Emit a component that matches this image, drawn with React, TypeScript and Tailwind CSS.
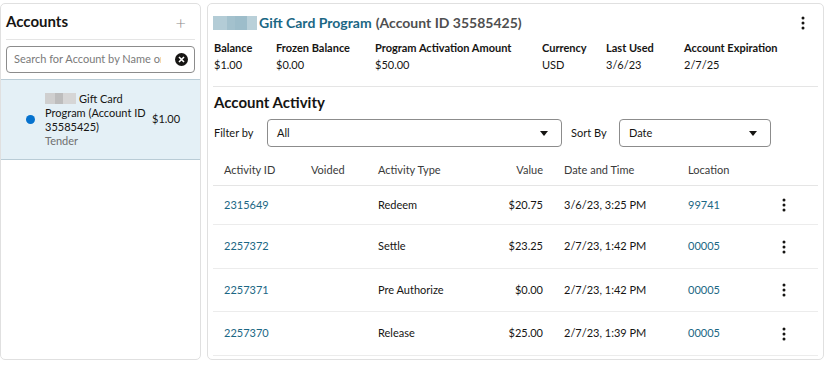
import React from "react";

const rows = [
  { id: "2315649", type: "Redeem", value: "$20.75", date: "3/6/23, 3:25 PM", loc: "99741", h: "h-[39px]" },
  { id: "2257372", type: "Settle", value: "$23.25", date: "2/7/23, 1:42 PM", loc: "00005", h: "h-[44px]" },
  { id: "2257371", type: "Pre Authorize", value: "$0.00", date: "2/7/23, 1:42 PM", loc: "00005", h: "h-[43px]" },
  { id: "2257370", type: "Release", value: "$25.00", date: "2/7/23, 1:39 PM", loc: "00005", h: "h-[44px]" },
];

const details = [
  { label: "Balance", value: "$1.00", w: "w-[62px]" },
  { label: "Frozen Balance", value: "$0.00", w: "w-[99px]" },
  { label: "Program Activation Amount", value: "$50.00", w: "w-[167px]" },
  { label: "Currency", value: "USD", w: "w-[64px]" },
  { label: "Last Used", value: "3/6/23", w: "w-[78px]" },
  { label: "Account Expiration", value: "2/7/25", w: "w-[120px]" },
];

const cols = "grid grid-cols-[87px_67px_120px_45px_145px_88px_16px]";

function Kebab() {
  return (
    <svg width="4" height="14" viewBox="0 0 4 14" className="fill-[#161513]">
      <circle cx="2" cy="2" r="1.5" />
      <circle cx="2" cy="7" r="1.5" />
      <circle cx="2" cy="12" r="1.5" />
    </svg>
  );
}

function Caret() {
  return (
    <svg width="8" height="5" viewBox="0 0 8 5" className="fill-[#161513]">
      <path d="M0 0h8L4 5z" />
    </svg>
  );
}

const App: React.FC = () => {
  return (
    <div className="w-[830px] h-[367px] bg-white flex gap-[6px] pt-[3px] pb-[7px] pr-[6px] text-[#161513] font-['Lato',sans-serif] text-[11px]">
      {/* accounts list */}
      <div className="w-[201px] shrink-0 border border-[#e0e0e0] rounded-[5px] flex flex-col">
        <div className="flex items-center justify-between h-[36px] shrink-0 mx-[5px] border-b border-[#e5e5e5]">
          <span className="text-[15px] font-bold">Accounts</span>
          <span className="text-[#8a8a8a] text-[18px] font-light mr-[9px] leading-none">+</span>
        </div>
        <div className="mx-[5px] mt-[6px] h-[27px] shrink-0 border border-[#8c8c8c] rounded-[4px] flex items-center pl-[7px] pr-[6px] gap-[14px]">
          <span className="flex-1 text-[#7a7a7a] text-[11px] whitespace-nowrap overflow-hidden">Search for Account by Name or ID</span>
          <span className="w-[13px] h-[13px] rounded-full bg-[#161513] flex items-center justify-center shrink-0">
            <svg width="7" height="7" viewBox="0 0 7 7" className="stroke-white" strokeWidth="1.6">
              <path d="M1 1l5 5M6 1L1 6" />
            </svg>
          </span>
        </div>
        <div className="mt-[6px] h-[81px] shrink-0 bg-[#e4f0f6] border-y border-[#b9ccd6] flex items-center">
          <span className="w-[9px] h-[9px] rounded-full bg-[#0572ce] ml-[25px] mr-[10px] shrink-0" />
          <div className="w-[103px] leading-[14px]">
            <div className="flex items-center">
              <span className="inline-flex h-[11px] mr-[3px]">
                <span className="w-[10px] bg-[#cfcfcf]" />
                <span className="w-[8px] bg-[#bdbdbd]" />
                <span className="w-[13px] bg-[#d6d6d6]" />
              </span>
              Gift Card
            </div>
            <div>Program (Account ID 35585425)</div>
            <div className="text-[#6f6f6f]">Tender</div>
          </div>
          <span className="ml-[4px]">$1.00</span>
        </div>
      </div>

      {/* account detail */}
      <div className="flex-1 border border-[#e0e0e0] rounded-[5px] px-[5px] flex flex-col">
        <div className="flex items-center h-[37px] shrink-0">
          <span className="inline-flex h-[14px] mr-[2px]">
            <span className="w-[14px] bg-[#b3ccd6]" />
            <span className="w-[8px] bg-[#a3c1cd]" />
            <span className="w-[12px] bg-[#9dbdca]" />
            <span className="w-[10px] bg-[#b9d0d9]" />
          </span>
          <span className="text-[14px] font-bold text-[#1b6784]">Gift Card Program</span>
          <span className="text-[14px] font-bold text-[#4f4f4f] ml-[4px]">(Account ID 35585425)</span>
          <span className="ml-auto mr-[13px]"><Kebab /></span>
        </div>
        <div className="flex shrink-0 pl-[1px] pb-[14px] border-b border-[#e5e5e5] leading-[14px]">
          {details.map((d) => (
            <div key={d.label} className={`${d.w} flex flex-col gap-[3px]`}>
              <span className="font-bold">{d.label}</span>
              <span>{d.value}</span>
            </div>
          ))}
        </div>
        <div className="text-[15px] leading-[20px] font-bold mt-[5px] pl-[1px] shrink-0">Account Activity</div>
        <div className="flex items-center mt-[7px] pl-[1px] shrink-0">
          <span className="w-[53px]">Filter by</span>
          <div className="w-[295px] h-[28px] border border-[#8c8c8c] rounded-[4px] flex items-center justify-between pl-[9px] pr-[13px]">
            <span>All</span>
            <Caret />
          </div>
          <span className="ml-[9px] w-[48px]">Sort By</span>
          <div className="w-[152px] h-[28px] border border-[#8c8c8c] rounded-[4px] flex items-center justify-between pl-[9px] pr-[13px]">
            <span>Date</span>
            <Caret />
          </div>
        </div>
        <div className="mt-[9px] shrink-0">
          <div className={`${cols} h-[30px] items-center pl-[11px] border-b border-[#e5e5e5] text-[#3a3a3a]`}>
            <span>Activity ID</span>
            <span>Voided</span>
            <span>Activity Type</span>
            <span className="text-right">Value</span>
            <span className="pl-[21px]">Date and Time</span>
            <span>Location</span>
            <span />
          </div>
          {rows.map((r) => (
            <div key={r.id} className={`${cols} ${r.h} items-center pl-[11px] border-b border-[#ececec]`}>
              <span className="text-[#1b6784]">{r.id}</span>
              <span />
              <span>{r.type}</span>
              <span className="text-right">{r.value}</span>
              <span className="pl-[21px]">{r.date}</span>
              <span className="text-[#1b6784]">{r.loc}</span>
              <span className="flex justify-center"><Kebab /></span>
            </div>
          ))}
        </div>
      </div>
    </div>
  );
};

export default App;
